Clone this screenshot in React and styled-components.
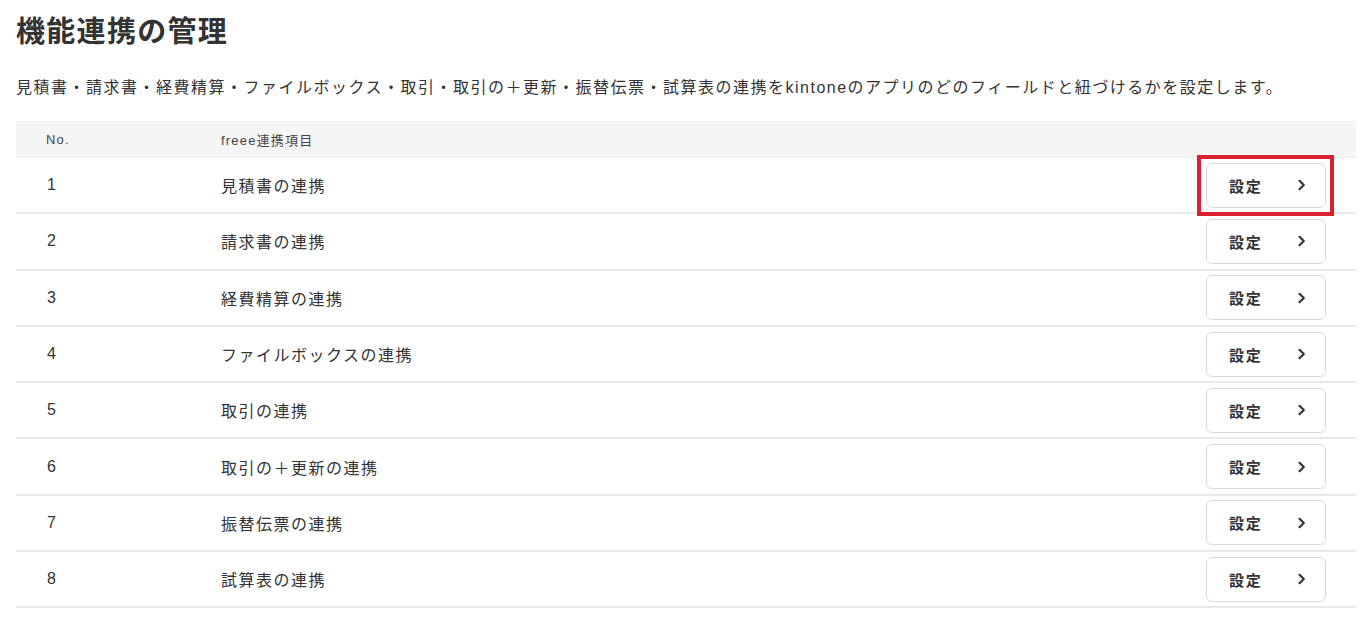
import React from "react";
import styled, { createGlobalStyle } from "styled-components";

const Global = createGlobalStyle`
  html, body { margin: 0; padding: 0; background: #fff; }
  body {
    font-family: "Liberation Sans", "Noto Sans CJK JP", sans-serif;
    color: #333;
  }
`;

const Page = styled.div`
  padding: 0 12px 0 16px;
`;

const Title = styled.h1`
  margin: 14px 0 0;
  font-size: 29px;
  line-height: 36px;
  font-weight: 700;
  letter-spacing: 1.3px;
  color: #333;
`;

const Lead = styled.p`
  margin: 26px 0 0;
  font-size: 16px;
  line-height: 24px;
  letter-spacing: 1.5px;
  color: #333;
`;

const Table = styled.div`
  margin-top: 21px;
  display: flex;
  flex-direction: column;
`;

const HeaderRow = styled.div`
  display: grid;
  grid-template-columns: 175px 1fr;
  align-items: center;
  height: 37px;
  background: #f6f5f5;
  border-bottom: 1px solid #e9e9e9;
  box-sizing: border-box;
  padding-left: 30px;
  font-size: 13px;
  letter-spacing: 1.2px;
  color: #444;
`;

const Row = styled.div`
  display: grid;
  grid-template-columns: 174px 1fr auto;
  align-items: center;
  height: 56.3px;
  box-sizing: border-box;
  border-bottom: 2px solid #e8e8e8;
  padding: 0 30px 0 31px;
  font-size: 16px;
  letter-spacing: 1.5px;
  color: #333;
`;

const Highlight = styled.span`
  display: flex;
  margin: -8px -8px -8px -9px;
  padding: 4px 4px 4px 5px;
  border: 4px solid #d9222d;
`;

const Button = styled.button`
  display: flex;
  align-items: center;
  justify-content: space-between;
  width: 120px;
  height: 45px;
  box-sizing: border-box;
  padding: 0 19px 0 22px;
  background: #fff;
  border: 1px solid #d9d9d9;
  border-radius: 6px;
  font-family: "Noto Sans CJK JP", sans-serif;
  font-size: 15px;
  font-weight: 700;
  letter-spacing: 1.8px;
  color: #333;
  cursor: pointer;
`;

const Chevron = () => (
  <svg width="9" height="12" viewBox="0 0 9 12" fill="none">
    <path d="M2.5 1.8 L6.8 6 L2.5 10.2" stroke="#333" strokeWidth="2.2" strokeLinecap="round" strokeLinejoin="round" />
  </svg>
);

const items = [
  "見積書の連携",
  "請求書の連携",
  "経費精算の連携",
  "ファイルボックスの連携",
  "取引の連携",
  "取引の＋更新の連携",
  "振替伝票の連携",
  "試算表の連携",
];

const SettingButton = () => (
  <Button>
    <span>設定</span>
    <Chevron />
  </Button>
);

export default function App() {
  return (
    <>
      <Global />
      <Page>
        <Title>機能連携の管理</Title>
        <Lead>
          見積書・請求書・経費精算・ファイルボックス・取引・取引の＋更新・振替伝票・試算表の連携をkintoneのアプリのどのフィールドと紐づけるかを設定します。
        </Lead>
        <Table>
          <HeaderRow>
            <span>No.</span>
            <span>freee連携項目</span>
          </HeaderRow>
          {items.map((name, i) => (
            <Row key={name}>
              <span>{i + 1}</span>
              <span>{name}</span>
              {i === 0 ? (
                <Highlight>
                  <SettingButton />
                </Highlight>
              ) : (
                <SettingButton />
              )}
            </Row>
          ))}
        </Table>
      </Page>
    </>
  );
}
